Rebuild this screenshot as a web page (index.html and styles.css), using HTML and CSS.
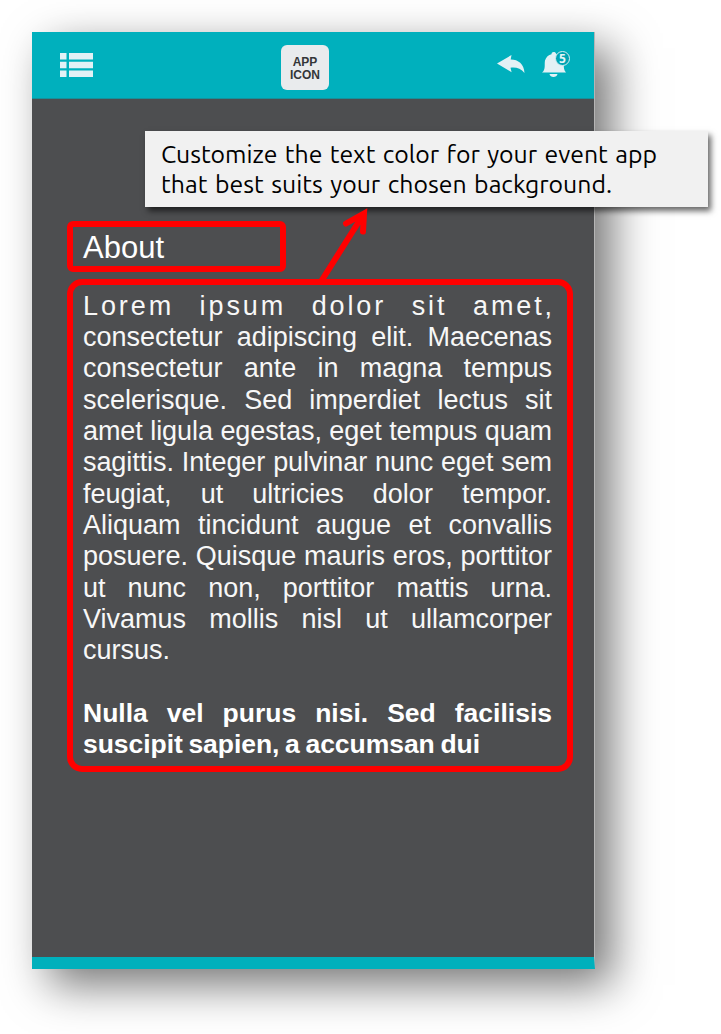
FILE: index.html
```html
<!DOCTYPE html>
<html lang="en">
<head>
<meta charset="utf-8">
<title>Event app – About</title>
<link rel="stylesheet" href="styles.css">
</head>
<body>
<main class="phone">
  <header class="topbar">
    <svg class="menu" width="34" height="24" viewBox="0 0 34 24"><path d="M0 0h6.500v6.500H0zM9 0h24v6.500H9zM0 8.700h6.500v6.500H0zM9 8.700h24v6.500H9zM0 17.400h6.500v6.500H0zM9 17.400h24v6.500H9z"/></svg>
    <div class="app-icon"><span>APP</span><span>ICON</span></div>
    <div class="actions">
      <svg class="reply" width="28" height="19" viewBox="0 0 28 19"><path d="M0 8.500 14.500 0 13.700 4.600C21 4.500 27 9 27.500 18 24 13.700 19 12 13.500 12.800L14.600 17.200Z"/></svg>
      <div class="bell">
        <svg width="30" height="29" viewBox="0 0 30 29"><path d="M0 22.500C4 20 2.200 14 3 10.500 4 7 6.500 4.800 9.500 4.200 9.500 1.500 13 1.500 14 3.500L22 14C21.500 18 22 20 24 22.500ZM7.500 24h8c-.5 4-7.500 4-8 0Z"/></svg>
        <span class="badge">5</span>
      </div>
    </div>
  </header>
  <section class="content">
    <h1 class="title">About</h1>
    <div class="body-text">
      <span class="line spaced">Lorem ipsum dolor sit amet,</span>
      <span class="line">consectetur adipiscing elit. Maecenas</span>
      <span class="line">consectetur ante in magna tempus</span>
      <span class="line">scelerisque. Sed imperdiet lectus sit</span>
      <span class="line tight">amet ligula egestas, eget tempus quam</span>
      <span class="line tight">sagittis. Integer pulvinar nunc eget sem</span>
      <span class="line">feugiat, ut ultricies dolor tempor.</span>
      <span class="line">Aliquam tincidunt augue et convallis</span>
      <span class="line">posuere. Quisque mauris eros, porttitor</span>
      <span class="line">ut nunc non, porttitor mattis urna.</span>
      <span class="line">Vivamus mollis nisl ut ullamcorper</span>
      <span class="line last">cursus.</span>
      <span class="line strong">Nulla vel purus nisi. Sed facilisis</span>
      <span class="line strong closing">suscipit sapien, a accumsan dui</span>
    </div>
  </section>
  <aside class="callout">
    <span class="note first">Customize the text color for your event app</span>
    <span class="note second">that best suits your chosen background.</span>
  </aside>
  <svg class="arrow" width="60" height="80" viewBox="0 0 60 80"><path d="M7 75 48 10M31 18.500 49 8.500 48 26.500"/></svg>
</main>
</body>
</html>
```

FILE: styles.css
```css
* { box-sizing: border-box; }
body {
  margin: 0;
  padding: 32px 0 0 32px;
  height: 1034px;
  overflow: hidden;
  background: #fff;
  font-family: "Liberation Sans", Arial, sans-serif;
}
.phone {
  position: relative;
  width: 563px;
  height: 937px;
  display: flex;
  flex-direction: column;
  background: #4d4e50;
  border-right: 1px solid #b5b5b5;
  border-bottom: 12px solid #00b0bc;
  box-shadow: 17px 16px 42px rgba(0, 0, 0, .54);
}
.topbar {
  height: 67px;
  flex: none;
  display: grid;
  grid-template-columns: 221px 48px 1fr;
  align-items: center;
  padding: 0 22px 0 28px;
  background: #00b0bd;
  border-bottom: 1px solid #16909a;
}
svg { display: block; fill: #e3f1f5; }
.app-icon {
  width: 48px;
  height: 45px;
  margin-top: 4px;
  border-radius: 6px;
  background: #e9ebed;
  color: #343638;
  display: flex;
  flex-direction: column;
  justify-content: center;
  align-items: center;
  padding-top: 3px;
  font-size: 12px;
  line-height: 13px;
  font-weight: bold;
}
.actions {
  display: flex;
  justify-content: flex-end;
  align-items: center;
  gap: 17px;
}
.reply { margin-top: -2px; }
.bell { position: relative; margin-top: -1px; }
.badge {
  position: absolute;
  left: 13px;
  top: 1px;
  width: 15px;
  height: 15px;
  border: 1.5px solid #d5edf2;
  border-radius: 50%;
  background: #00a4b3;
  color: #e6f5f7;
  font: bold 12px/13px "Open Sans", sans-serif;
  text-align: center;
}
.content {
  padding: 122px 21px 0 35px;
  color: #fff;
}
.title {
  margin: 0;
  width: 219px;
  height: 51px;
  border: 6px solid #f00;
  border-radius: 6px;
  padding: 0 10px;
  font-size: 31px;
  line-height: 41px;
  font-weight: normal;
}
.body-text {
  margin-top: 7px;
  height: 493px;
  width: 506px;
  border: 6px solid #f00;
  border-radius: 15px;
  padding: 5.6px 15px 0 10px;
  font-size: 27px;
  line-height: 31.35px;
  color: #f7f7f7;
}
.line {
  display: block;
  width: 469px;
  white-space: nowrap;
  text-align: justify;
  text-align-last: justify;
}
.tight { letter-spacing: -.08px; }
.spaced { letter-spacing: 2.9px; width: 472px; }
.last { text-align-last: left; }
.strong { font-weight: bold; font-size: 26.5px; color: #fff; }
.last + .strong { margin-top: 31.35px; }
.closing { width: 397px; letter-spacing: -.05px; word-spacing: -3px; }
.callout {
  position: absolute;
  left: 113px;
  top: 99px;
  width: 563px;
  height: 76px;
  padding: 8px 16px 0;
  background: #f1f1f1;
  box-shadow: 3px 4px 6px rgba(0, 0, 0, .6);
  color: #000;
  font: 24.8px/30px Ubuntu, "Noto Sans", sans-serif;
}
.note {
  display: block;
  white-space: nowrap;
  text-align: justify;
  text-align-last: justify;
}
.first { width: 496px; }
.second { width: 451px; }
.arrow {
  position: absolute;
  left: 283px;
  top: 173px;
  fill: none;
  stroke: #f00;
  stroke-width: 6px;
  stroke-linecap: round;
  stroke-linejoin: miter;
}
```
